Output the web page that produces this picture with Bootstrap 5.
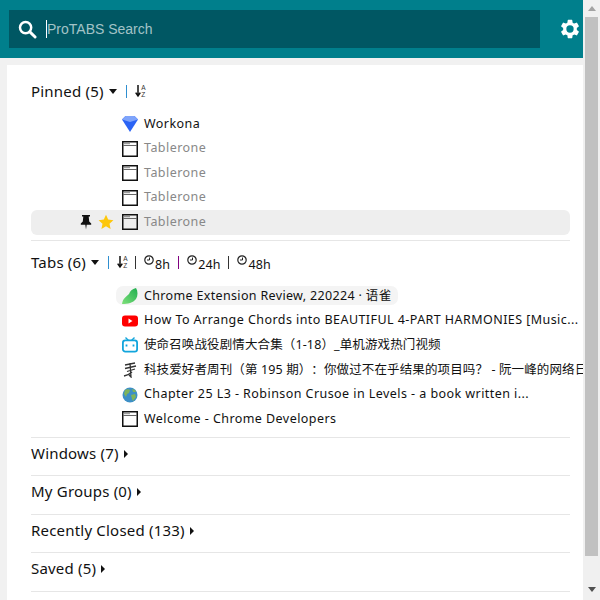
<!doctype html>
<html lang="en"><head><meta charset="utf-8"><title>ProTABS</title>
<link href="https://cdn.jsdelivr.net/npm/bootstrap@5.3.0/dist/css/bootstrap.min.css" rel="stylesheet">
<style>
html,body{height:600px;overflow:hidden;margin:0}
body{background:#f1f1f1;font-family:"Noto Sans","Noto Sans CJK SC",sans-serif;color:#111}
.shell{width:600px;height:600px}
.mainpane{width:583px;height:600px;overflow:hidden}
.topbar{height:58px;background:#007f8c;padding:10px 0 10px 9px}
.searchbox{width:531px;height:38px;background:#005763;padding-left:9px}
.searchtext{font-family:"Liberation Sans",sans-serif;font-size:14px;color:#a3c3c7;border-left:1px solid #fff;line-height:18px;margin-left:9px}
.gearwrap{margin-left:19px}
.sheet{background:#fff;margin:7px 0 0 7px;padding:14px 13px 0 24px;height:600px}
.headrow{font-size:15px;letter-spacing:.2px;height:24px;line-height:24px;white-space:nowrap}
.tabshead{margin-top:7px;padding-top:4px}
.vbar{width:1px;height:13px;margin:0 8px;background:#333;flex:none}
.vbar.blue{background:#2f8fd0}
.vbar.mag{background:#800080}
.sortsvg{margin-right:-2px;flex:none}
.hours{font-size:12.5px;position:relative;top:3px;letter-spacing:.1px;margin-left:1px}
.caretdown{border:4px solid transparent;border-top:5px solid #111;border-bottom:0;margin:0 1px 0 5px}
.caretright{display:inline-block;border:4.5px solid transparent;border-left-color:#111;border-right:0;margin-left:5px;vertical-align:1px}
.pinlist{padding:9px 0 5.5px}
.pinlist .tabrow{height:24.5px}
.openlist{padding:11.5px 0 5px}
.tabrow{height:24.7px;font-size:12.5px;letter-spacing:.44px;white-space:nowrap;border-radius:6px;padding-left:91px}
.tabrow.hl{background:#eee;padding-left:49px}
.favslot{width:16px;height:16px;flex:none;margin-right:6px}
.tabtitle{white-space:nowrap}
.tabtitle.wide{letter-spacing:.12px;text-spacing-trim:space-all}
.tabtitle.tight{letter-spacing:.34px}
.muted{color:#888}
.pill{background:#f4f4f4;border-radius:7px;margin-left:-6px;padding:0 6px;height:19px;line-height:19px}
.rule{border-top:1px solid #e6e6e6}
.leadpin{width:12px;height:16px;flex:none;margin-right:6px}
.leadstar{width:16px;height:16px;flex:none;margin-right:8px}
.closedsec{height:37.5px;padding-top:3px}
.fakebar{width:17px;height:600px;background:#f0f0f0;padding:0 2px}
.barbtn{height:17px}
.barthumb{height:539px;background:#c1c1c1}
.tri-up{width:0;height:0;border:4px solid transparent;border-bottom:5px solid #a3a3a3;border-top:0}
.tri-dn{width:0;height:0;border:4px solid transparent;border-top:5px solid #505050;border-bottom:0}
.clockico{margin-top:-5px;flex:none}
</style></head>
<body>
<div class="shell d-flex">
<div class="mainpane">
  <div class="topbar d-flex align-items-center">
    <div class="searchbox d-flex align-items-center">
      <svg width="19" height="19" viewBox="0 0 20 20"><circle cx="8" cy="8" r="5.900" fill="none" stroke="#fff" stroke-width="2.600"/><path d="M12.500 12.500 18 18" stroke="#fff" stroke-width="3" stroke-linecap="round"/></svg>
      <div class="searchtext">ProTABS Search</div>
    </div>
    <div class="gearwrap d-flex">
      <svg width="22" height="22" viewBox="0 0 24 24"><path fill="#fff" fill-rule="evenodd" d="M19.430 12.980c.04-.32.07-.64.07-.98s-.03-.66-.07-.98l2.110-1.650a.5.5 0 0 0 .12-.64l-2-3.460a.5.5 0 0 0-.61-.22l-2.490 1a7.300 7.300 0 0 0-1.690-.98l-.38-2.650A.49.49 0 0 0 14 2h-4a.49.49 0 0 0-.49.42l-.38 2.650c-.61.25-1.170.59-1.690.98l-2.490-1a.5.5 0 0 0-.61.22l-2 3.460a.5.5 0 0 0 .12.64l2.110 1.650c-.04.32-.07.65-.07.98s.03.66.07.98l-2.110 1.650a.5.5 0 0 0-.12.64l2 3.460c.12.22.39.3.61.22l2.490-1c.52.4 1.080.73 1.690.98l.38 2.650c.03.24.24.42.49.42h4c.25 0 .46-.18.49-.42l.38-2.650a7.300 7.300 0 0 0 1.690-.98l2.490 1c.23.09.49 0 .61-.22l2-3.460a.5.5 0 0 0-.12-.64zM12 16a4 4 0 1 1 0-8 4 4 0 0 1 0 8z"/></svg>
    </div>
  </div>
  <div class="sheet">
    <div class="headrow d-flex align-items-center">
      <span>Pinned (5)</span><span class="caretdown"></span><span class="vbar blue"></span>
      <svg class="sortsvg" width="12" height="14" viewBox="0 0 12 14"><use href="#sortaz"/></svg>
    </div>
    <div class="pinlist">
      <div class="tabrow d-flex align-items-center">
        <svg class="favslot" viewBox="0 0 16 16"><path d="M0 3.500 3.500 0h9L16 3.500 8 16z" fill="#2a63f5"/><path d="M3.500 0h9L16 3.500 8 6 0 3.500z" fill="#7fa4fb"/></svg>
        <span class="tabtitle">Workona</span>
      </div>
      <div class="tabrow d-flex align-items-center"><svg class="favslot" viewBox="0 0 16 16"><use href="#win"/></svg><span class="tabtitle muted">Tablerone</span></div>
      <div class="tabrow d-flex align-items-center"><svg class="favslot" viewBox="0 0 16 16"><use href="#win"/></svg><span class="tabtitle muted">Tablerone</span></div>
      <div class="tabrow d-flex align-items-center"><svg class="favslot" viewBox="0 0 16 16"><use href="#win"/></svg><span class="tabtitle muted">Tablerone</span></div>
      <div class="tabrow hl d-flex align-items-center">
        <svg class="leadpin" viewBox="0 0 12 16"><path d="M2 1h8v1.600H8.700L9.200 7.500l2 2v1.300H6.700L6 15.500 5.300 10.800H.8V9.500l2-2 .5-4.900H2z" fill="#111"/></svg>
        <svg class="leadstar" viewBox="0 0 16 16"><path d="m8 .8 2.200 4.800 5.200.6-3.900 3.500 1.100 5.200L8 12.300l-4.600 2.600 1.100-5.200L.6 6.200l5.200-.6z" fill="#fdc70c"/></svg>
        <svg class="favslot" viewBox="0 0 16 16"><use href="#win"/></svg><span class="tabtitle muted">Tablerone</span>
      </div>
    </div>
    <div class="rule"></div>
    <div class="headrow tabshead d-flex align-items-center">
      <span>Tabs (6)</span><span class="caretdown"></span><span class="vbar blue"></span>
      <svg class="sortsvg" width="12" height="14" viewBox="0 0 12 14"><use href="#sortaz"/></svg>
      <span class="vbar"></span>
      <svg class="clockico" width="10" height="10" viewBox="0 0 10 10"><use href="#clk"/></svg><span class="hours">8h</span>
      <span class="vbar mag"></span>
      <svg class="clockico" width="10" height="10" viewBox="0 0 10 10"><use href="#clk"/></svg><span class="hours">24h</span>
      <span class="vbar"></span>
      <svg class="clockico" width="10" height="10" viewBox="0 0 10 10"><use href="#clk"/></svg><span class="hours">48h</span>
    </div>
    <div class="openlist">
      <div class="tabrow d-flex align-items-center">
        <div class="pill d-flex align-items-center">
        <svg class="favslot" viewBox="0 0 16 16"><defs><linearGradient id="birdg" x1="0" y1="1" x2="1" y2="0"><stop offset="0" stop-color="#7fe07a"/><stop offset="1" stop-color="#1fae4f"/></linearGradient></defs><path d="M0 16C1 10 4 9 7 6c1-3 3-5 7-6 2 3 2 8 0 11-3 4-8 5-14 5z" fill="url(#birdg)"/></svg>
        <span class="tabtitle tight">Chrome Extension Review, 220224 · 语雀</span></div>
      </div>
      <div class="tabrow d-flex align-items-center">
        <svg class="favslot" viewBox="0 0 16 16"><rect y="2.500" width="16" height="11" rx="3" fill="#f00"/><path d="m6.500 5.500 4 2.500-4 2.500z" fill="#fff"/></svg>
        <span class="tabtitle">How To Arrange Chords into BEAUTIFUL 4-PART HARMONIES [Music...</span>
      </div>
      <div class="tabrow d-flex align-items-center">
        <svg class="favslot" viewBox="0 0 16 16"><path d="m3.500.5 3 3m6-3-3 3" stroke="#12a5dc" stroke-width="1.400"/><rect x=".9" y="3.400" width="14.200" height="11.200" rx="2.400" fill="none" stroke="#12a5dc" stroke-width="1.800"/><path d="M4.500 7.500v2m7-2v2" stroke="#12a5dc" stroke-width="1.800"/></svg>
        <span class="tabtitle wide">使命召唤战役剧情大合集（1-18）_单机游戏热门视频</span>
      </div>
      <div class="tabrow d-flex align-items-center">
        <svg class="favslot" viewBox="0 0 16 16"><path d="M3 3 13 1M3 6.500 14 4M5 9.500 13 7M2 14c4-1 6-2 8-4M8 1l1 14-2-2" fill="none" stroke="#333" stroke-width="1.300"/></svg>
        <span class="tabtitle wide">科技爱好者周刊（第 195 期）：你做过不在乎结果的项目吗？ - 阮一峰的网络日</span>
      </div>
      <div class="tabrow d-flex align-items-center">
        <svg class="favslot" viewBox="0 0 16 16"><circle cx="8" cy="8" r="7.500" fill="#3d8fc6"/><path d="M3 3c2-1 4-1 5 0L7 6 5 7 4 10 2 7zM9 8l4-1 1 3-3 4-1-2zM10 2l3 1 1 2-3 0z" fill="#7fb45a"/></svg>
        <span class="tabtitle">Chapter 25 L3 - Robinson Crusoe in Levels - a book written i...</span>
      </div>
      <div class="tabrow d-flex align-items-center"><svg class="favslot" viewBox="0 0 16 16"><use href="#win"/></svg><span class="tabtitle">Welcome - Chrome Developers</span></div>
    </div>
    <div class="rule"></div>
    <div class="closedsec headrow">Windows (7)<span class="caretright"></span></div>
    <div class="rule"></div>
    <div class="closedsec headrow">My Groups (0)<span class="caretright"></span></div>
    <div class="rule"></div>
    <div class="closedsec headrow">Recently Closed (133)<span class="caretright"></span></div>
    <div class="rule"></div>
    <div class="closedsec headrow">Saved (5)<span class="caretright"></span></div>
    <div class="rule"></div>
  </div>
</div>
<div class="fakebar d-flex flex-column align-items-center">
  <div class="barbtn d-flex align-items-center justify-content-center"><div class="tri-up"></div></div>
  <div class="barthumb w-100"></div>
  <div class="flex-grow-1 d-flex align-items-end justify-content-center pb-1"><div class="tri-dn mb-1"></div></div>
</div>
</div>
<svg width="0" height="0" class="d-block"><defs>
<g id="win"><rect x=".75" y=".75" width="14.500" height="14.500" fill="none" stroke="#111" stroke-width="1.500"/><path d="M1 4.500h14" stroke="#666"/><path d="M2.500 2.700h1m1 0h1m1 0h1" stroke="#111"/></g>
<g id="sortaz"><path d="M3 1v10M.7 8.600 3 12l2.300-3.400" fill="none" stroke="#111" stroke-width="1.500"/><text x="6.300" y="6" font-size="6.500" font-family="Liberation Sans" fill="#333">A</text><text x="6.300" y="13" font-size="6.500" font-family="Liberation Sans" fill="#333">Z</text></g>
<g id="clk"><circle cx="5" cy="5" r="4.200" fill="none" stroke="#222" stroke-width="1.200"/><path d="M5.500 2.500V5H3" fill="none" stroke="#222"/></g>
</defs></svg>
<script src="https://cdn.jsdelivr.net/npm/bootstrap@5.3.0/dist/js/bootstrap.bundle.min.js"></script>
</body></html>
